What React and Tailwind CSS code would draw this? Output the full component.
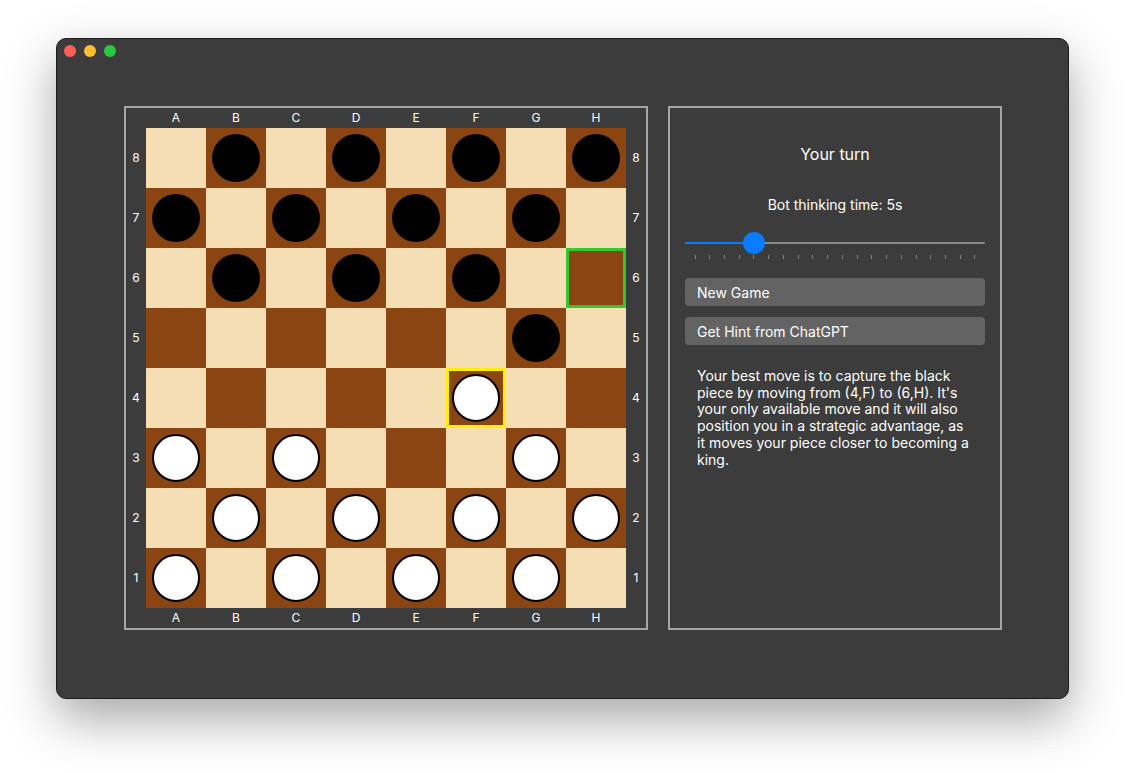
import React from "react";

const FILES = ["A", "B", "C", "D", "E", "F", "G", "H"];
const RANKS = [8, 7, 6, 5, 4, 3, 2, 1];

// b = black piece, w = white piece
const PIECES = {
  B8: "b", D8: "b", F8: "b", H8: "b",
  A7: "b", C7: "b", E7: "b", G7: "b",
  B6: "b", D6: "b", F6: "b",
  G5: "b",
  F4: "w",
  A3: "w", C3: "w", G3: "w",
  B2: "w", D2: "w", F2: "w", H2: "w",
  A1: "w", C1: "w", E1: "w", G1: "w",
};

const Square = ({ file, rank, fi, ri }) => {
  const id = file + rank;
  const dark = (fi + ri) % 2 === 1;
  const piece = PIECES[id];
  let ring = "";
  if (id === "H6") ring = "border-[3px] border-[#33c92e]";
  if (id === "F4") ring = "border-[3px] border-[#ffee00]";
  return (
    <div
      className={`w-[60px] h-[60px] flex items-center justify-center ${dark ? "bg-[#8b4513]" : "bg-[#f5deb3]"} ${ring}`}
    >
      {piece === "b" && <div className="w-[48px] h-[48px] rounded-full bg-black" />}
      {piece === "w" && (
        <div className="w-[48px] h-[48px] rounded-full bg-white border-2 border-black" />
      )}
    </div>
  );
};

const FileLabels = () => (
  <div className="flex pl-[20px] h-[20px] items-center">
    {FILES.map((f) => (
      <div key={f} className="w-[60px] text-center text-[12px] text-white">
        {f}
      </div>
    ))}
  </div>
);

const RankLabels = () => (
  <div className="w-[20px] flex flex-col">
    {RANKS.map((r) => (
      <div key={r} className="h-[60px] flex items-center justify-center text-[12px] text-white">
        {r}
      </div>
    ))}
  </div>
);

const Board = () => (
  <div className="border-2 border-[#a6a6a6] w-[524px] h-[524px] flex flex-col">
    <FileLabels />
    <div className="flex">
      <RankLabels />
      <div className="grid grid-cols-8 w-[480px]">
        {RANKS.map((rank, ri) =>
          FILES.map((file, fi) => (
            <Square key={file + rank} file={file} rank={rank} fi={fi} ri={ri} />
          ))
        )}
      </div>
      <RankLabels />
    </div>
    <FileLabels />
  </div>
);

const Slider = () => {
  const ticks = Array.from({ length: 20 });
  const pct = (4 / 19) * 280 + 10;
  return (
    <div className="mt-[18px]">
      <div className="relative h-[22px] flex items-center">
        <div className="h-[2px] w-full bg-[#8a8a8a] rounded-full" />
        <div
          className="absolute left-0 h-[2px] bg-[#0a7aff] rounded-full"
          style={{ width: pct }}
        />
        <div
          className="absolute w-[22px] h-[22px] rounded-full bg-[#0a7cff]"
          style={{ left: pct - 11 }}
        />
      </div>
      <div className="flex justify-between px-[9.5px] mt-[1px]">
        {ticks.map((_, i) => (
          <div key={i} className="w-px h-[4px] bg-[#808080]" />
        ))}
      </div>
    </div>
  );
};

const SidePanel = () => (
  <div className="border-2 border-[#a6a6a6] w-[334px] h-[524px] px-[15px] flex flex-col text-white">
    <div className="text-center text-[16px] mt-[36px] leading-[20px]">Your turn</div>
    <div className="text-center text-[14px] mt-[32px] leading-[18px]">Bot thinking time: 5s</div>
    <Slider />
    <button className="mt-[19px] h-[28px] rounded-[4px] bg-[#636363] text-left px-[12px] text-[14px] text-white">
      New Game
    </button>
    <button className="mt-[11px] h-[28px] rounded-[4px] bg-[#636363] text-left px-[12px] text-[14px] text-white">
      Get Hint from ChatGPT
    </button>
    <p className="mt-[23px] px-[12px] text-[14px] leading-[16.7px] w-[296px]">
      Your best move is to capture the black piece by moving from (4,F) to (6,H). It's your only
      available move and it will also position you in a strategic advantage, as it moves your
      piece closer to becoming a king.
    </p>
  </div>
);

export default function App() {
  return (
    <div
      className="w-[1125px] h-[773px] bg-white flex justify-center pt-[38px]"
      style={{ fontFamily: "Inter, 'Noto Sans', sans-serif" }}
    >
      <div className="w-[1013px] h-[661px] rounded-[10px] bg-[#3c3c3c] border border-[#1e1e1e] shadow-[0_20px_50px_rgba(0,0,0,0.35)] flex flex-col">
        <div className="flex gap-[8px] pl-[7px] pt-[6px]">
          <div className="w-[12px] h-[12px] rounded-full bg-[#fe5f57]" />
          <div className="w-[12px] h-[12px] rounded-full bg-[#febc2e]" />
          <div className="w-[12px] h-[12px] rounded-full bg-[#28c840]" />
        </div>
        <div className="flex gap-[20px] pl-[67px] mt-[49px]">
          <Board />
          <SidePanel />
        </div>
      </div>
    </div>
  );
}
